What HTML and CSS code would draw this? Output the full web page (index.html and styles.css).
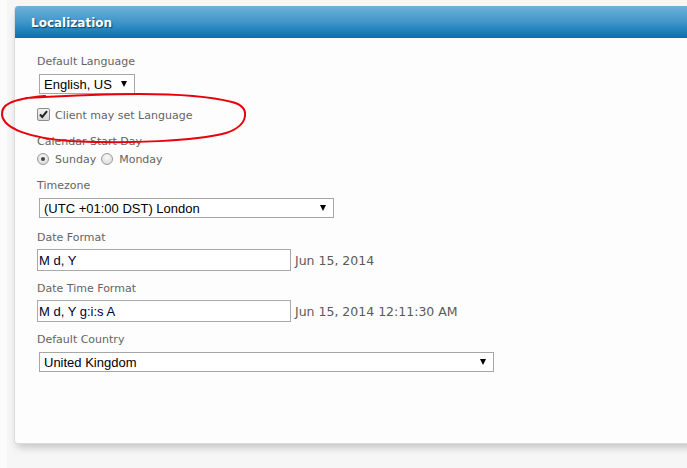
FILE: index.html
```html
<!DOCTYPE html>
<html>
<head>
<meta charset="utf-8">
<link rel="stylesheet" href="styles.css">
</head>
<body>
<div class="page">
  <div class="panel">
    <div class="panel-head">Localization</div>
    <div class="panel-body">
      <div class="field f-lang">
        <div class="label">Default Language</div>
        <div class="select w-lang"><span>English, US</span><span class="caret"></span></div>
      </div>
      <div class="check-row">
        <span class="checkbox"><svg width="11" height="11" viewBox="0 0 11 11"><path d="M2 5.5 L4.3 8 L9 2.2" fill="none" stroke="#222" stroke-width="2"/></svg></span>
        <span class="opt-text">Client may set Language</span>
      </div>
      <div class="field f-cal">
        <div class="label">Calendar Start Day</div>
        <div class="radio-row">
          <span class="radio on"></span><span class="opt-text">Sunday</span>
          <span class="radio"></span><span class="opt-text">Monday</span>
        </div>
      </div>
      <div class="field f-tz">
        <div class="label">Timezone</div>
        <div class="select w-tz"><span>(UTC +01:00 DST) London</span><span class="caret"></span></div>
      </div>
      <div class="field f-date">
        <div class="label">Date Format</div>
        <div class="input-row">
          <div class="input">M d, Y</div>
          <span class="sample">Jun 15, 2014</span>
        </div>
      </div>
      <div class="field f-dt">
        <div class="label">Date Time Format</div>
        <div class="input-row">
          <div class="input">M d, Y g:i:s A</div>
          <span class="sample">Jun 15, 2014 12:11:30 AM</span>
        </div>
      </div>
      <div class="field f-country">
        <div class="label">Default Country</div>
        <div class="select w-country"><span>United Kingdom</span><span class="caret"></span></div>
      </div>
    </div>
  </div>
</div>
<svg class="annot" width="260" height="160" viewBox="0 0 260 160">
  <path d="M26 98 C 100 94, 185 90, 232 102 C 240 104, 246 108, 245 116 C 244 124, 238 129, 226 133 C 195 141, 130 144, 70 141 C 30 138, 4 129, 2 115 C 1 105, 10 99, 45 96" fill="none" stroke="#e8000b" stroke-width="2" stroke-linecap="round"/>
</svg>
</body>
</html>
```

FILE: styles.css
```css
html, body {
  margin: 0;
  padding: 0;
  background: #f6f6f6;
  overflow: hidden;
  height: 468px;
}
.page {
  border-left: 7px solid #fbfbfb;
  padding: 6px 0 0 7px;
  height: 468px;
  box-sizing: border-box;
}
.panel {
  margin-right: -30px;
  height: 438px;
  box-sizing: border-box;
  background: #fdfdfd;
  border: 1px solid #dcdcdc;
  border-top: none;
  border-radius: 4px;
  box-shadow: 0 6px 8px -3px rgba(0,0,0,0.22);
  overflow: hidden;
}
.panel-head {
  height: 32px;
  box-sizing: border-box;
  padding: 2px 0 0 17px;
  display: flex;
  align-items: center;
  background: linear-gradient(to bottom, #6eb1d8 0%, #4096c9 50%, #0570b0 100%);
  color: #fff;
  font-family: "DejaVu Sans", Verdana, sans-serif;
  font-weight: bold;
  font-size: 12px;
  text-shadow: 1px 1px 1px rgba(0,0,0,0.55);
  border-radius: 3px 3px 0 0;
  margin-left: -1px;
  margin-right: -1px;
}
.panel-body {
  padding: 17px 0 0 22px;
}
.label {
  font-family: "DejaVu Sans", Verdana, sans-serif;
  font-size: 11px;
  line-height: 14px;
  color: #646464;
}
.select {
  display: flex;
  justify-content: space-between;
  align-items: center;
  height: 20px;
  box-sizing: border-box;
  margin-left: 2px;
  padding: 0 7px 0 4px;
  border: 1px solid #a6a6a6;
  background: #fff;
  font-family: "Liberation Sans", Arial, sans-serif;
  font-size: 13px;
  color: #000;
}
.caret {
  width: 0;
  height: 0;
  border-left: 3.5px solid transparent;
  border-right: 3.5px solid transparent;
  border-top: 6px solid #000;
}
.w-lang { width: 96px; margin-top: 5px; }
.w-tz { width: 295px; margin-top: 5px; }
.w-country { width: 455px; margin-top: 5px; }
.check-row {
  display: flex;
  align-items: center;
  margin-top: 14px;
  height: 13px;
}
.checkbox {
  width: 13px;
  height: 13px;
  box-sizing: border-box;
  border: 1px solid #8e8e8e;
  border-radius: 2px;
  background: linear-gradient(to bottom, #f2f2f2, #d6d6d6);
  display: flex;
  align-items: center;
  justify-content: center;
}
.opt-text {
  font-family: "DejaVu Sans", Verdana, sans-serif;
  font-size: 11px;
  color: #646464;
  line-height: 14px;
  padding-top: 2px;
  margin-left: 5px;
}
.f-cal { margin-top: 14px; }
.radio-row {
  display: flex;
  align-items: center;
  margin-top: 3px;
  height: 14px;
}
.radio {
  width: 12px;
  height: 12px;
  box-sizing: border-box;
  border: 1px solid #9a9a9a;
  border-radius: 50%;
  background: radial-gradient(circle at 50% 35%, #fafafa, #d4d4d4);
  display: flex;
  align-items: center;
  justify-content: center;
}
.radio.on::after {
  content: "";
  width: 4px;
  height: 4px;
  border-radius: 50%;
  background: #444;
}
.radio-row .opt-text { margin-left: 6px; margin-right: 5px; }
.f-tz { margin-top: 13px; }
.f-date { margin-top: 13px; }
.f-dt { margin-top: 11px; }
.f-country { margin-top: 11px; }
.input-row {
  display: flex;
  align-items: center;
  margin-top: 4px;
}
.f-dt .input-row { margin-top: 4px; }
.input {
  width: 254px;
  height: 22px;
  box-sizing: border-box;
  border: 1px solid #a9a9a9;
  background: #fff;
  padding: 0 1px;
  display: flex;
  align-items: center;
  font-family: "Liberation Sans", Arial, sans-serif;
  font-size: 13px;
  color: #000033;
}
.sample {
  margin-left: 4px;
  padding-top: 1px;
  font-family: "DejaVu Sans", Verdana, sans-serif;
  font-size: 12.5px;
  color: #5a5a5a;
}
.annot {
  position: absolute;
  left: 0;
  top: 0;
  pointer-events: none;
}
```
